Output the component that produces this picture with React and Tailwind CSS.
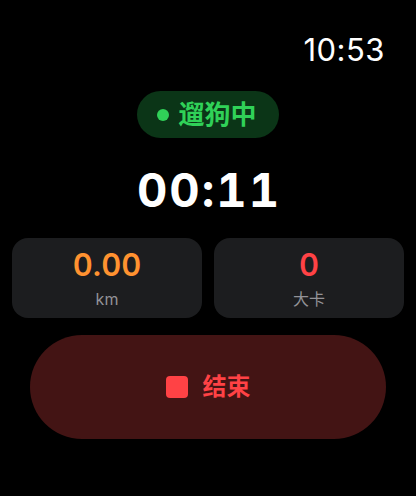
const FONT = "font-['Inter','Noto_Sans_CJK_SC',sans-serif]";

const StatCard = ({ value, unit, color }) => (
  <div className="flex h-[80px] flex-1 flex-col items-center justify-center rounded-[16px] bg-[#1c1d1f]">
    <span className={`text-[31px] font-semibold leading-none tabular-nums ${color}`}>{value}</span>
    <span className="mt-[11px] text-[16px] leading-none text-[#929297]">{unit}</span>
  </div>
);

export default function App() {
  return (
    <div className={`flex h-[496px] w-[416px] flex-col bg-black text-white ${FONT}`}>
      <div className="flex justify-end pr-[31px] pt-[34px]">
        <span className="text-[31px] font-normal leading-none tracking-[0.5px]">10:53</span>
      </div>

      <div className="mt-[26px] flex justify-center">
        <div className="flex h-[47px] items-center gap-[9px] rounded-full bg-[#0b3517] pl-[20px] pr-[22px]">
          <span className="h-[12px] w-[12px] rounded-full bg-[#30d158]" />
          <span className="text-[26px] font-bold leading-none text-[#30d158]">遛狗中</span>
        </div>
      </div>

      <div className="mt-[28px] flex justify-center">
        <span className="pl-[2px] text-[47px] font-bold leading-none tracking-[2px] tabular-nums">00:11</span>
      </div>

      <div className="mt-[25px] flex gap-[12px] px-[12px]">
        <StatCard value="0.00" unit="km" color="text-[#ff9230]" />
        <StatCard value="0" unit="大卡" color="text-[#ff4245]" />
      </div>

      <div className="mt-[17px] flex px-[30px]">
        <button className="flex h-[104px] flex-1 items-center justify-center gap-[15px] rounded-full bg-[#431414]">
          <span className="h-[22px] w-[22px] rounded-[4px] bg-[#ff4245]" />
          <span className="text-[24px] font-bold leading-none text-[#ff4245]">结束</span>
        </button>
      </div>
    </div>
  );
}
